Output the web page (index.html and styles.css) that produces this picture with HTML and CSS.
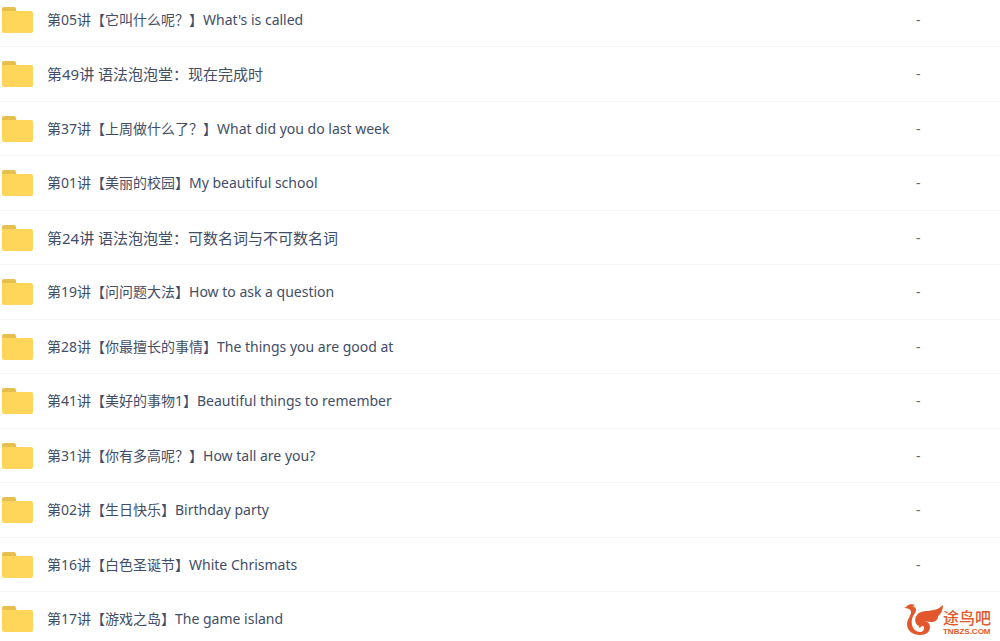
FILE: index.html
```
<!DOCTYPE html>
<html lang="zh-CN">
<head>
    <meta charset="UTF-8">
    <meta name="viewport" content="width=device-width, initial-scale=1.0">
    <title>课程目录</title>
    <link rel="stylesheet" href="styles.css">
</head>
<body>
    <!-- Ícone de pasta reutilizado em todas as linhas -->
    <svg class="sprite" aria-hidden="true">
        <symbol id="folder" viewBox="0 0 31 26">
            <path fill="#e6bf4e" d="M0 7V2a2 2 0 0 1 2-2h10a2 2 0 0 1 2 2l1 5z"/>
            <path fill="#ffd659" d="M0 4h29a2 2 0 0 1 2 2v18a2 2 0 0 1-2 2H2a2 2 0 0 1-2-2z"/>
        </symbol>
    </svg>

    <table class="file-list">
        <tbody>
            <tr><td class="name"><svg class="icon"><use href="#folder"/></svg><a href="#">第05讲【它叫什么呢？】What's is called</a></td><td class="size">-</td></tr>
            <tr><td class="name"><svg class="icon"><use href="#folder"/></svg><a href="#" class="zh">第49讲 语法泡泡堂：现在完成时</a></td><td class="size">-</td></tr>
            <tr><td class="name"><svg class="icon"><use href="#folder"/></svg><a href="#">第37讲【上周做什么了？】What did you do last week</a></td><td class="size">-</td></tr>
            <tr><td class="name"><svg class="icon"><use href="#folder"/></svg><a href="#">第01讲【美丽的校园】My beautiful school</a></td><td class="size">-</td></tr>
            <tr><td class="name"><svg class="icon"><use href="#folder"/></svg><a href="#" class="zh">第24讲 语法泡泡堂：可数名词与不可数名词</a></td><td class="size">-</td></tr>
            <tr><td class="name"><svg class="icon"><use href="#folder"/></svg><a href="#">第19讲【问问题大法】How to ask a question</a></td><td class="size">-</td></tr>
            <tr><td class="name"><svg class="icon"><use href="#folder"/></svg><a href="#">第28讲【你最擅长的事情】The things you are good at</a></td><td class="size">-</td></tr>
            <tr><td class="name"><svg class="icon"><use href="#folder"/></svg><a href="#">第41讲【美好的事物1】Beautiful things to remember</a></td><td class="size">-</td></tr>
            <tr><td class="name"><svg class="icon"><use href="#folder"/></svg><a href="#">第31讲【你有多高呢？】How tall are you?</a></td><td class="size">-</td></tr>
            <tr><td class="name"><svg class="icon"><use href="#folder"/></svg><a href="#">第02讲【生日快乐】Birthday party</a></td><td class="size">-</td></tr>
            <tr><td class="name"><svg class="icon"><use href="#folder"/></svg><a href="#">第16讲【白色圣诞节】White Chrismats</a></td><td class="size">-</td></tr>
            <tr><td class="name"><svg class="icon"><use href="#folder"/></svg><a href="#">第17讲【游戏之岛】The game island</a></td><td class="size"></td></tr>
        </tbody>
    </table>

    <div class="watermark">
        <svg class="bird" viewBox="0 0 40 32" aria-hidden="true">
            <g fill="#e2572b">
                <!-- cabeça e corpo -->
                <path d="M0 4c2 0 3-1 4-2C6 0 9 0 12 1c-1 1-2 1-3 1 4 1 5 4 3 7-3 4-4 8-3 12 1 4 4 7 8 7 3 0 4-2 4-5-1-2-3-1-4 1-2-1-2-5 1-6 4-2 9 0 9 5 0 5-4 8-10 8C10 31 4 27 4 20c0-5 4-8 4-12C8 5 5 4 0 4z"/>
                <!-- asa -->
                <path d="M40 1c0 5-2 9-5 11 0 4-3 6-7 6-5-1-10-1-13 4-3-3-4-7-1-11 2-3 6-4 11-4 7-1 11-2 15-6z"/>
            </g>
        </svg>
        <div class="brand">
            <span class="brand-name">途鸟吧</span>
            <span class="brand-url">TNBZS.COM</span>
        </div>
    </div>
</body>
</html>
```
FILE: styles.css
```
body {
    font-family: "Noto Sans", "Noto Sans CJK SC", sans-serif;
    font-size: 14px;
    margin: 0;
    height: 100vh;
    overflow: hidden;
    background-color: #fff;
    color: #424e67;
    text-spacing-trim: space-all;
}

.sprite {
    position: absolute;
    width: 0;
    height: 0;
}

.file-list {
    width: 100%;
    margin-top: -7px;
    border-collapse: separate;
    border-spacing: 0;
    table-layout: fixed;
}

.file-list td {
    box-sizing: border-box;
    height: 54px;
    padding: 0;
    line-height: 20px;
    border-bottom: 1px solid #f5f6f8;
    vertical-align: middle;
}

.file-list tr:nth-child(even) td {
    height: 55px;
}

.name a {
    color: inherit;
    text-decoration: none;
    vertical-align: middle;
}

.name .zh {
    font-size: 15px;
}

.icon {
    width: 31px;
    height: 26px;
    margin: 0 14px 0 2px;
    vertical-align: middle;
}

.file-list .size {
    width: 84px;
    color: #666;
}

/* Marca no canto, por cima da lista */
.watermark {
    position: absolute;
    right: 9px;
    bottom: 5px;
    display: flex;
    align-items: flex-end;
    color: #e2572b;
}

.bird {
    width: 40px;
    height: 32px;
}

.brand {
    display: flex;
    flex-direction: column;
    font-family: Roboto, "Noto Sans CJK SC", sans-serif;
}

.brand-name {
    font-size: 16px;
    font-weight: 500;
    line-height: 18px;
}

.brand-url {
    font-family: "Liberation Sans", sans-serif;
    font-size: 8px;
    font-weight: bold;
    line-height: 8px;
}
```
